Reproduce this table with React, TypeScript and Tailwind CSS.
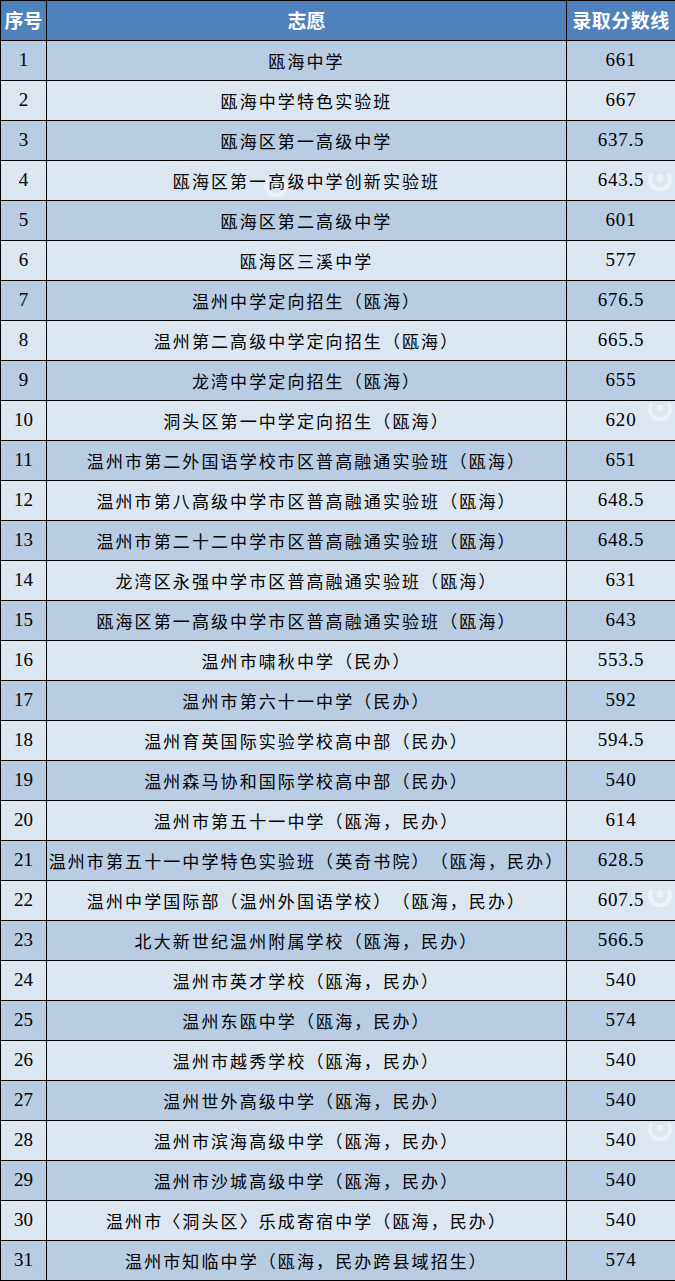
const rows: [string, string][] = [
  ['瓯海中学', '661'],
  ['瓯海中学特色实验班', '667'],
  ['瓯海区第一高级中学', '637.5'],
  ['瓯海区第一高级中学创新实验班', '643.5'],
  ['瓯海区第二高级中学', '601'],
  ['瓯海区三溪中学', '577'],
  ['温州中学定向招生（瓯海）', '676.5'],
  ['温州第二高级中学定向招生（瓯海）', '665.5'],
  ['龙湾中学定向招生（瓯海）', '655'],
  ['洞头区第一中学定向招生（瓯海）', '620'],
  ['温州市第二外国语学校市区普高融通实验班（瓯海）', '651'],
  ['温州市第八高级中学市区普高融通实验班（瓯海）', '648.5'],
  ['温州市第二十二中学市区普高融通实验班（瓯海）', '648.5'],
  ['龙湾区永强中学市区普高融通实验班（瓯海）', '631'],
  ['瓯海区第一高级中学市区普高融通实验班（瓯海）', '643'],
  ['温州市啸秋中学（民办）', '553.5'],
  ['温州市第六十一中学（民办）', '592'],
  ['温州育英国际实验学校高中部（民办）', '594.5'],
  ['温州森马协和国际学校高中部（民办）', '540'],
  ['温州市第五十一中学（瓯海，民办）', '614'],
  ['温州市第五十一中学特色实验班（英奇书院）（瓯海，民办）', '628.5'],
  ['温州中学国际部（温州外国语学校）（瓯海，民办）', '607.5'],
  ['北大新世纪温州附属学校（瓯海，民办）', '566.5'],
  ['温州市英才学校（瓯海，民办）', '540'],
  ['温州东瓯中学（瓯海，民办）', '574'],
  ['温州市越秀学校（瓯海，民办）', '540'],
  ['温州世外高级中学（瓯海，民办）', '540'],
  ['温州市滨海高级中学（瓯海，民办）', '540'],
  ['温州市沙城高级中学（瓯海，民办）', '540'],
  ['温州市〈洞头区〉乐成寄宿中学（瓯海，民办）', '540'],
  ['温州市知临中学（瓯海，民办跨县域招生）', '574'],
];

const cjk = "font-['Noto_Sans_CJK_SC',sans-serif]";
const num = "font-['Liberation_Serif','Noto_Sans_CJK_SC',serif]";

// faint round logo of the watermark, lying over the table
function Logo({ className }: { className: string }) {
  return (
    <svg className={`pointer-events-none absolute ${className}`} width="28" height="28" viewBox="0 0 28 28">
      <path d="M5 9 A10 10 0 1 0 23 9" fill="none" stroke="rgba(255,255,255,0.45)" strokeWidth="4" strokeLinecap="round" />
      <circle cx="14" cy="12" r="3.5" fill="rgba(255,255,255,0.45)" />
    </svg>
  );
}

export default function App() {
  return (
    <div className="relative w-[675px] overflow-hidden bg-[#dce6f1]">
      <div className="grid grid-cols-[46px_520px_1fr] border-t border-l border-black text-black">
        <div className={`flex h-10 items-center justify-center border-r border-b border-black bg-[#4f81bd] text-[19px] font-bold text-white ${cjk}`}>
          序号
        </div>
        <div className={`flex h-10 items-center justify-center border-r border-b border-black bg-[#4f81bd] text-[19px] font-bold text-white ${cjk}`}>
          志愿
        </div>
        <div className={`flex h-10 items-center justify-center border-b border-black bg-[#4f81bd] text-[19px] font-bold tracking-[0.5px] text-white ${cjk}`}>
          录取分数线
        </div>
        {rows.map(([name, score], i) => {
          const bg = i % 2 === 0 ? 'bg-[#b8cce4]' : 'bg-[#dce6f1]';
          return (
            <div key={i} className="contents">
              <div className={`flex h-10 items-center justify-center border-r border-b border-black text-[19px] ${num} ${bg}`}>
                {i + 1}
              </div>
              <div className={`flex h-10 items-center justify-center whitespace-nowrap border-r border-b border-black text-[17px] tracking-[2.1px] [text-spacing-trim:space-all] [font-feature-settings:'halt'_0] ${cjk} ${bg}`}>
                {name}
              </div>
              <div className={`flex h-10 items-center justify-center border-b border-black text-[19px] tracking-[0.8px] ${num} ${bg}`}>
                {score}
              </div>
            </div>
          );
        })}
      </div>
      <Logo className="left-[262px] top-[172px]" />
      <Logo className="left-[646px] top-[166px]" />
      <Logo className="left-[646px] top-[396px]" />
      <Logo className="left-[646px] top-[882px]" />
      <Logo className="left-[646px] top-[1116px]" />
    </div>
  );
}
